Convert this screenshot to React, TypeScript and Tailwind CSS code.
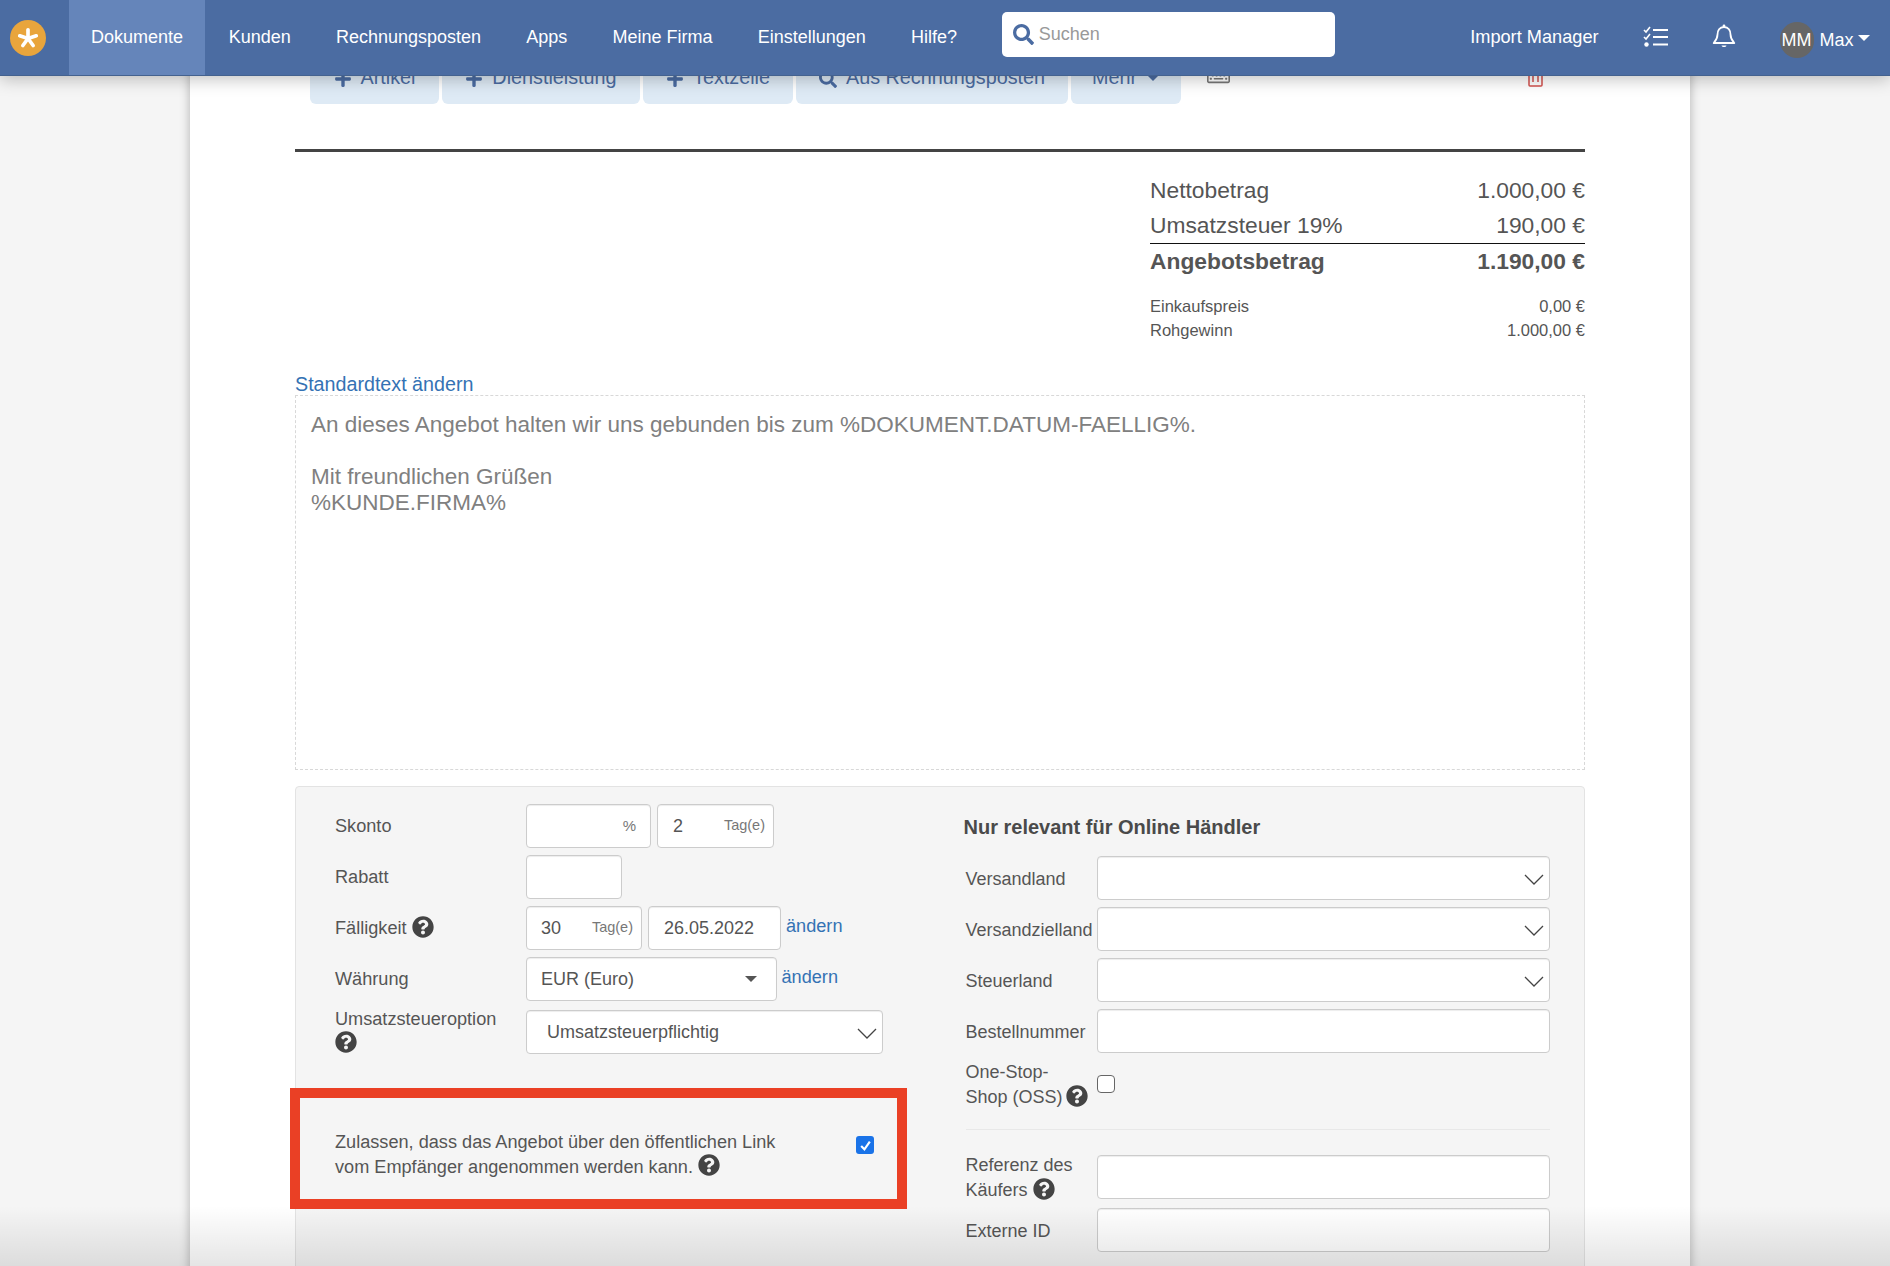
import React from "react";
import { FaPlus, FaQuestionCircle, FaRegKeyboard, FaSearch } from "react-icons/fa";

const navItems = ["Kunden", "Rechnungsposten", "Apps", "Meine Firma", "Einstellungen", "Hilfe?"];

const Help: React.FC<{ className?: string }> = ({ className }) => (
  <FaQuestionCircle className={`text-[22px] text-[#444] ${className ?? "inline-block"}`} />
);

const Logo = () => (
  <div className="flex h-[36px] w-[36px] items-center justify-center rounded-full bg-[#e9a53c]">
    <svg width="22" height="22" viewBox="0 0 24 24" stroke="white" strokeWidth="4" strokeLinecap="round">
      <line x1="12" y1="12.5" x2="12" y2="3" />
      <line x1="12" y1="12.5" x2="21" y2="9.6" />
      <line x1="12" y1="12.5" x2="17.6" y2="20.2" />
      <line x1="12" y1="12.5" x2="6.4" y2="20.2" />
      <line x1="12" y1="12.5" x2="3" y2="9.6" />
    </svg>
  </div>
);

const TasksIcon = () => (
  <svg width="26" height="22" viewBox="0 0 26 22" fill="none" stroke="white" className="ml-[44px] mt-[26px]">
    <polyline points="1,4 3,6 7,1" strokeWidth="1.6" />
    <polyline points="1,11 3,13 7,8" strokeWidth="1.6" />
    <circle cx="3.5" cy="18.5" r="2.2" fill="white" stroke="none" />
    <line x1="10" y1="4" x2="25" y2="4" strokeWidth="2" />
    <line x1="10" y1="11" x2="25" y2="11" strokeWidth="2" />
    <line x1="10" y1="18.5" x2="25" y2="18.5" strokeWidth="2" />
  </svg>
);

const BellIcon = () => (
  <svg width="24" height="25" viewBox="0 0 24 25" fill="none" stroke="white" strokeWidth="1.8" className="ml-[43px] mt-[24px]">
    <path d="M12 3c-4.5 0-6.5 3.5-6.5 7.5 0 4-1.5 6-3.8 8.5h20.6c-2.3-2.5-3.8-4.5-3.8-8.5C18.5 6.500 16.500 3 12 3z" strokeLinejoin="round" />
    <circle cx="12" cy="2" r="1.4" fill="white" stroke="none" />
    <path d="M9.500 21.500h5c-.6 2-4.400 2-5 0z" fill="white" stroke="none" />
  </svg>
);

const TrashIcon = () => (
  <svg width="15" height="20" viewBox="0 0 15 20" fill="none" stroke="#d2504c" strokeWidth="1.5" className="ml-[298px] mt-[13px]">
    <rect x="1" y="3" width="13" height="16" rx="1" />
    <line x1="5" y1="3" x2="5" y2="15" />
    <line x1="10" y1="3" x2="10" y2="15" />
  </svg>
);

const Chevron = () => (
  <svg width="20" height="11" viewBox="0 0 20 11" fill="none" className="absolute right-[5px] top-[17px]">
    <polyline points="1,1 10,10 19,1" stroke="#444" strokeWidth="1.3" />
  </svg>
);

const Box: React.FC<{ className?: string; children?: React.ReactNode }> = ({ className, children }) => (
  <div
    className={`relative flex h-[44px] items-center rounded-[4px] border border-[#ccc] bg-white text-[18px] text-[#555] shadow-[inset_0_1px_1px_rgba(0,0,0,0.075)] ${className ?? ""}`}
  >
    {children}
  </div>
);

const Suffix: React.FC<{ children: React.ReactNode }> = ({ children }) => (
  <span className="absolute right-[8px] text-[14.5px] text-[#777]">{children}</span>
);

const TopButton: React.FC<{ width: string; icon?: React.ReactNode; children: React.ReactNode }> = ({ width, icon, children }) => (
  <button className={`flex h-[50px] items-end justify-center gap-[9px] rounded-b-[6px] bg-[#deeaf5] pb-[15px] text-[19.8px] leading-[24px] text-[#4b6ca2] ${width}`}>
    {icon}
    {children}
  </button>
);

const RightRow: React.FC<{ label: React.ReactNode; select?: boolean; className?: string }> = ({ label, select, className }) => (
  <div className={`flex items-center ${className ?? ""}`}>
    <div className="w-[131.5px] shrink-0 pt-[2px] leading-[25px]">{label}</div>
    <div className="flex-1">
      <Box>{select && <Chevron />}</Box>
    </div>
  </div>
);

export default function App() {
  return (
    <div className="relative h-screen overflow-hidden bg-[#f5f5f5] text-[18px] text-[#555] [font-family:'Liberation_Sans',Arial,sans-serif]">
      <nav className="relative z-10 flex h-[76px] items-stretch border-b border-[#44628f] bg-[#4b6ca2] text-white shadow-[0_3px_16px_rgba(0,0,0,0.25)]">
        <div className="flex w-[69px] items-center pl-[10px]">
          <Logo />
        </div>
        <a className="flex items-center bg-[#6585ba] px-[22px]">Dokumente</a>
        <div className="flex pl-[1px]">
          {navItems.map((item) => (
            <a key={item} className="flex items-center px-[22.6px]">
              {item}
            </a>
          ))}
        </div>
        <div className="ml-[22.65px] mt-[12px] flex h-[45px] w-[333px] items-center gap-[5px] rounded-[5px] bg-white pl-[10.5px] text-[#999]">
          <FaSearch className="text-[21px] text-[#4b6ca2]" />
          Suchen
        </div>
        <a className="ml-[135px] flex items-center text-[18.2px]">Import Manager</a>
        <TasksIcon />
        <BellIcon />
        <div className="ml-[44px] mt-[22px] flex h-[36px] items-center">
          <div className="flex h-[36px] w-[34px] items-center justify-center rounded-full bg-[#666]">MM</div>
          <span className="ml-[6px]">Max</span>
          <span className="ml-[4px] mb-[5px] h-0 w-0 border-x-[6px] border-t-[6px] border-x-transparent border-t-white" />
        </div>
      </nav>

      <main className="relative -mt-[22px] ml-[190px] w-[1500px] bg-white px-[105px] shadow-[0_0_10px_rgba(0,0,0,0.28)]">
        <div className="relative flex">
          <div className="ml-[15px] flex gap-[3px]">
            <TopButton width="w-[129px]" icon={<FaPlus className="mb-[1px] text-[18px]" />}>Artikel</TopButton>
            <TopButton width="w-[198px]" icon={<FaPlus className="mb-[1px] text-[18px]" />}>Dienstleistung</TopButton>
            <TopButton width="w-[150px]" icon={<FaPlus className="mb-[1px] text-[18px]" />}>Textzeile</TopButton>
            <TopButton width="w-[272px]" icon={<FaSearch className="mb-[1px] text-[18px]" />}>Aus Rechnungsposten</TopButton>
            <TopButton width="w-[110px]">
              Mehr
              <span className="mb-[8px] h-0 w-0 border-x-[7px] border-t-[7px] border-x-transparent border-t-[#4b6ca2]" />
            </TopButton>
          </div>
          <FaRegKeyboard className="ml-[26px] mt-[10px] text-[23px] text-[#777]" />
          <TrashIcon />
        </div>

        <div className="mt-[45px] h-[3px] bg-[#444]" />

        <div className="ml-auto mt-[21px] w-[435px] text-[22.8px] leading-[34px]">
          <div className="flex h-[35px] justify-between">
            <span>Nettobetrag</span>
            <span>1.000,00 €</span>
          </div>
          <div className="flex h-[35px] justify-between">
            <span>Umsatzsteuer 19%</span>
            <span>190,00 €</span>
          </div>
          <div className="flex h-[36px] items-center justify-between border-t-[1.5px] border-[#111] pb-[1px] font-bold">
            <span>Angebotsbetrag</span>
            <span>1.190,00 €</span>
          </div>
          <div className="mt-[15px] flex justify-between text-[16.5px] leading-[24px]">
            <span>Einkaufspreis</span>
            <span>0,00 €</span>
          </div>
          <div className="flex justify-between text-[16.5px] leading-[24px]">
            <span>Rohgewinn</span>
            <span>1.000,00 €</span>
          </div>
        </div>

        <a className="mt-[30px] block pt-[1px] text-[19.7px] leading-[22px] text-[#3472b4]">Standardtext ändern</a>
        <div className="h-[375px] border border-dashed border-[#d8d8d8] px-[15px] pt-[16px] text-[22.5px] leading-[26px] text-[#808080]">
          An dieses Angebot halten wir uns gebunden bis zum %DOKUMENT.DATUM-FAELLIG%.
          <br />
          <br />
          Mit freundlichen Grüßen
          <br />
          %KUNDE.FIRMA%
        </div>

        <section className="mt-[16px] flex justify-between rounded-[4px] border border-[#e3e3e3] bg-[#f5f5f5] pb-[60px] pl-[39px] pr-[34px] pt-[17px]">
          <div className="w-[548px] text-[18.15px]">
            <div className="flex flex-col gap-[7px]">
              <div className="flex items-center">
                <div className="w-[191px] pt-[2px]">Skonto</div>
                <Box className="w-[125px]">
                  <span className="absolute right-[14px] text-[15px] text-[#777]">%</span>
                </Box>
                <Box className="ml-[6px] w-[117px]">
                  <span className="pl-[15px]">2</span>
                  <Suffix>Tag(e)</Suffix>
                </Box>
              </div>
              <div className="flex items-center">
                <div className="w-[191px] pt-[2px]">Rabatt</div>
                <Box className="w-[96px]" />
              </div>
              <div className="flex items-center">
                <div className="flex w-[191px] items-center gap-[5px] pt-[2px]">
                  Fälligkeit
                  <Help className="-mt-[3px]" />
                </div>
                <Box className="w-[116px]">
                  <span className="pl-[14px]">30</span>
                  <Suffix>Tag(e)</Suffix>
                </Box>
                <Box className="ml-[6px] w-[133px]">
                  <span className="pl-[15px]">26.05.2022</span>
                </Box>
                <a className="ml-[5px] -mt-[2px] text-[#3472b4]">ändern</a>
              </div>
              <div className="flex items-center">
                <div className="w-[191px] pt-[2px]">Währung</div>
                <Box className="w-[251px]">
                  <span className="pl-[14px]">EUR (Euro)</span>
                  <span className="absolute right-[19px] h-0 w-0 border-x-[6px] border-t-[6px] border-x-transparent border-t-[#555]" />
                </Box>
                <a className="ml-[4.5px] -mt-[2px] text-[#3472b4]">ändern</a>
              </div>
            </div>
            <div className="mt-[9px] flex">
              <div className="-mt-[3px] w-[191px] leading-[24px]">
                Umsatzsteueroption
                <Help className="block" />
              </div>
              <Box className="w-[357px]">
                <span className="pl-[20px]">Umsatzsteuerpflichtig</span>
                <Chevron />
              </Box>
            </div>

            <div className="relative mt-[76px] flex w-[539px] items-start justify-between leading-[25px]">
              <div className="absolute -left-[45px] -top-[42px] h-[121px] w-[617px] border-[10px] border-[#ea4025]" />
              <p>
                Zulassen, dass das Angebot über den öffentlichen Link
                <br />
                vom Empfänger angenommen werden kann. <Help className="-mt-[6px] inline-block align-middle" />
              </p>
              <div className="mt-[6px] flex h-[18px] w-[18px] items-center justify-center rounded-[3px] bg-[#1a73e8]">
                <svg width="13" height="13" viewBox="0 0 12 12" fill="none">
                  <polyline points="2,6.500 5,9.500 10,2.500" stroke="white" strokeWidth="2" />
                </svg>
              </div>
            </div>
          </div>

          <div className="w-[584.5px]">
            <h3 className="-ml-[2px] mb-[17px] mt-[11px] text-[20px] font-bold leading-[24px] text-[#4a4a4a]">Nur relevant für Online Händler</h3>
            <div className="flex flex-col gap-[7px]">
              <RightRow label="Versandland" select />
              <RightRow label="Versandzielland" select />
              <RightRow label="Steuerland" select />
              <RightRow label="Bestellnummer" />
            </div>
            <div className="mt-[7px] flex items-start">
              <div className="w-[131.5px] shrink-0 leading-[25px]">
                One-Stop-
                <br />
                Shop (OSS)<Help className="-mt-[4px] ml-[3px] inline-block align-middle" />
              </div>
              <div className="mt-[15px] h-[18px] w-[18px] rounded-[4px] border border-[#666] bg-white" />
            </div>
            <div className="mt-[19px] h-px bg-[#e8e8e8]" />
            <RightRow
              className="mt-[21px]"
              label={
                <>
                  Referenz des
                  <br />
                  Käufers <Help className="-mt-[4px] inline-block align-middle" />
                </>
              }
            />
            <RightRow className="mt-[5px]" label="Externe ID" />
          </div>
        </section>
      </main>

      <div className="pointer-events-none absolute inset-x-0 bottom-0 h-[60px] bg-gradient-to-b from-transparent to-[rgba(0,0,0,0.1)]" />
    </div>
  );
}
